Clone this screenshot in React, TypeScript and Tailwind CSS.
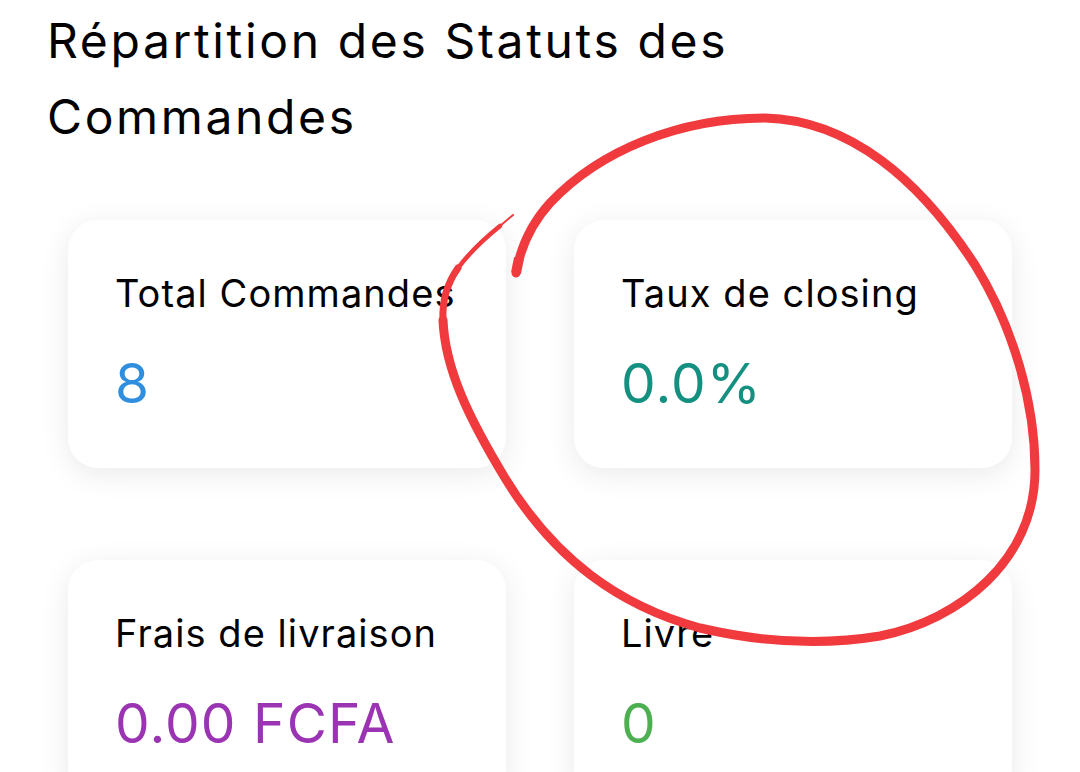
import React from "react";

type Stat = { label: string; value: string; color: string };

const stats: Stat[] = [
  { label: "Total Commandes", value: "8", color: "text-[#2f8fde]" },
  { label: "Taux de closing", value: "0.0%", color: "text-[#13907f]" },
  { label: "Frais de livraison", value: "0.00 FCFA", color: "text-[#9a34b2]" },
  { label: "Livre", value: "0", color: "text-[#4caf50]" },
];

function StatCard({ s }: { s: Stat }) {
  return (
    <div className="bg-white rounded-[30px] shadow-[0_6px_30px_rgba(0,0,0,0.085)] pl-[47px] pr-6 pt-[51px] pb-[52px] h-[248px]">
      <div className="text-[38px] leading-[1.2] tracking-[0.028em] text-black whitespace-nowrap">{s.label}</div>
      <div className={`mt-[33px] text-[55px] leading-[1.2] tracking-[0.02em] ${s.color}`}>{s.value}</div>
    </div>
  );
}

// hand-drawn marker loop around the closing-rate card
function MarkerLoop() {
  const red = "#f03a3e";
  return (
    <svg className="absolute inset-0 pointer-events-none" width="1080" height="772" viewBox="0 0 1080 772" fill="none" strokeLinecap="round">
      <path
        d="M516 273 C520 250 530 225 550 203 C600 150 680 118 765 118 C850 120 920 180 975 265 C1012 325 1035 400 1035 470 C1035 560 960 620 880 636 C820 646 760 642 700 628 C620 606 555 560 505 478 C470 420 445 370 443 320"
        stroke={red}
        strokeWidth="9"
      />
      {/* tapering end of the stroke */}
      <path d="M443 320 C442 300 448 282 458 268" stroke={red} strokeWidth="7" />
      <path d="M458 268 C470 252 485 238 500 226" stroke={red} strokeWidth="4.5" />
      <path d="M500 226 L513 215" stroke={red} strokeWidth="2" />
      <path d="M516 273 L519 258" stroke={red} strokeWidth="10" strokeLinecap="butt" />
    </svg>
  );
}

export default function App() {
  return (
    <div className="relative w-[1080px] h-[772px] overflow-hidden bg-white" style={{ fontFamily: "Inter, 'Noto Sans', sans-serif" }}>
      <h1 className="pl-[47px] pt-[3px] text-[48px] leading-[76px] tracking-[0.055em] font-normal text-black">
        Répartition des Statuts des
        <br />
        Commandes
      </h1>
      <div className="grid grid-cols-2 gap-x-[68px] gap-y-[92px] px-[68px] mt-[65px]">
        {stats.map(s => (
          <StatCard key={s.label} s={s} />
        ))}
      </div>
      <MarkerLoop />
    </div>
  );
}
